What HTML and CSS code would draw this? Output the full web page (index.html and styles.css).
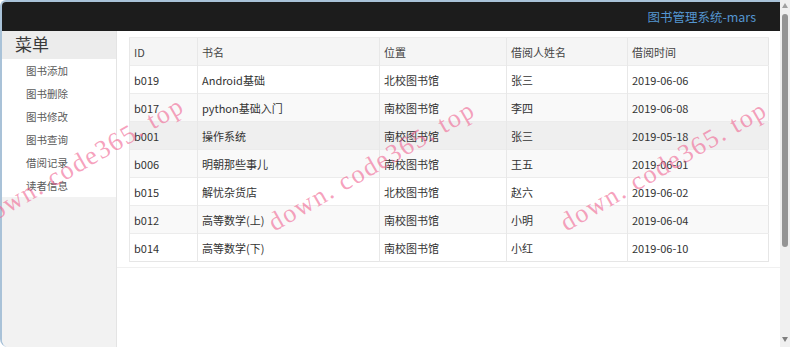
FILE: index.html
```html
<!DOCTYPE html>
<html lang="zh-CN">
<head>
  <meta charset="utf-8">
  <meta content="initial-scale=1" name="viewport">
  <title>图书管理系统-mars</title>
  <link rel="stylesheet" href="styles.css">
</head>
<body>
  <div class="screen">
    <div class="window">
      <header class="topbar"><span class="brand">图书管理系统-mars</span></header>
      <div class="layout">
        <aside class="sidebar">
          <div class="menu-title">菜单</div>
          <ul class="menu">
            <li>图书添加</li>
            <li>图书删除</li>
            <li>图书修改</li>
            <li>图书查询</li>
            <li>借阅记录</li>
            <li>读者信息</li>
          </ul>
        </aside>
        <main class="content">
          <div class="panel">
            <table class="books">
              <colgroup>
                <col class="c-id"><col class="c-name"><col class="c-place"><col class="c-reader"><col class="c-date">
              </colgroup>
              <thead>
                <tr><th>ID</th><th>书名</th><th>位置</th><th>借阅人姓名</th><th>借阅时间</th></tr>
              </thead>
              <tbody>
                <tr><td>b019</td><td>Android基础</td><td>北校图书馆</td><td>张三</td><td>2019-06-06</td></tr>
                <tr><td>b017</td><td>python基础入门</td><td>南校图书馆</td><td>李四</td><td>2019-06-08</td></tr>
                <tr class="active"><td>b001</td><td>操作系统</td><td>南校图书馆</td><td>张三</td><td>2019-05-18</td></tr>
                <tr><td>b006</td><td>明朝那些事儿</td><td>南校图书馆</td><td>王五</td><td>2019-06-01</td></tr>
                <tr><td>b015</td><td>解忧杂货店</td><td>北校图书馆</td><td>赵六</td><td>2019-06-02</td></tr>
                <tr><td>b012</td><td>高等数学(上)</td><td>南校图书馆</td><td>小明</td><td>2019-06-04</td></tr>
                <tr><td>b014</td><td>高等数学(下)</td><td>南校图书馆</td><td>小红</td><td>2019-06-10</td></tr>
              </tbody>
            </table>
          </div>
        </main>
      </div>
    </div>
    <div class="scrollbar">
      <span class="arrow up"></span>
      <span class="track"><span class="thumb"></span></span>
      <span class="arrow down"></span>
    </div>
    <!-- watermark overlay -->
    <div class="watermark wm-1">down. code365. top</div>
    <div class="watermark wm-2">down. code365. top</div>
    <div class="watermark wm-3">down. code365. top</div>
  </div>
</body>
</html>
```

FILE: styles.css
```css
html, body { margin: 0; height: 100%; background: #fff; }
body { font-family: "Noto Sans CJK SC", "Liberation Sans", sans-serif; color: #333; overflow: hidden; }

.screen { position: relative; display: flex; width: 790px; height: 347px; overflow: hidden; }

.window { flex: 1; display: flex; flex-direction: column; border-top: 2px solid #a9c2d8; border-left: 2px solid #a9c2d8; border-radius: 6px 0 0 8px; overflow: hidden; background: #fff; }

.topbar { height: 29px; flex-shrink: 0; background: #1c1c1c; display: flex; align-items: center; justify-content: flex-end; padding-right: 24px; }
.brand { color: #5495d0; font-size: 12.5px; }

.layout { flex: 1; display: flex; }

.sidebar { width: 114px; flex-shrink: 0; background: #f2f2f2; border-right: 1px solid #e4e4e4; }
.menu-title { height: 28px; line-height: 26px; padding-left: 13px; font-size: 17px; color: #3a3a3a; background: #ececec; }
.menu { list-style: none; margin: 0; padding: 0; background: #fff; }
.menu li { height: 23px; line-height: 23px; padding-left: 24px; font-size: 10.5px; color: #5a5a5a; }

.content { flex: 1; background: #fff; }
.panel { padding: 6px 12px 5px; border-bottom: 1px solid #f0f0f0; }

.books { width: 639px; border-collapse: collapse; table-layout: fixed; font-size: 11px; border: 1px solid #e6e6e6; }
.c-id { width: 68px; }
.c-name { width: 182px; }
.c-place { width: 127px; }
.c-reader { width: 121px; }
.c-date { width: 141px; }
.books th, .books td { height: 27px; padding: 0 4px; text-align: left; font-weight: normal; border-left: 1px solid #e8e8e8; border-top: 1px solid #ececec; color: #333; white-space: nowrap; }
.books thead tr { background: #f5f5f5; }
.books th { color: #444; }
.books tbody tr:nth-child(even) { background: #f9f9f9; }
.books tbody tr.active { background: #efefef; }

.scrollbar { width: 10px; flex-shrink: 0; background: #f0f0f0; display: flex; flex-direction: column; align-items: center; }
.arrow { width: 0; height: 0; border-left: 3.5px solid transparent; border-right: 3.5px solid transparent; }
.arrow.up { margin-top: 3px; border-bottom: 5px solid #a0a0a0; }
.arrow.down { margin-bottom: 5px; border-top: 5px solid #808080; }
.track { flex: 1; width: 100%; display: flex; justify-content: center; padding-top: 6px; }
.thumb { width: 6px; height: 233px; background: #959595; border-radius: 3px; }

.watermark { position: absolute; font-family: "Liberation Serif", serif; font-size: 26px; letter-spacing: 1.6px; line-height: 1; color: rgba(240, 100, 145, 0.6); white-space: nowrap; transform: rotate(-30deg); transform-origin: 0 100%; pointer-events: none; }
.wm-1 { left: -14px; top: 206px; }
.wm-2 { left: 277px; top: 210px; }
.wm-3 { left: 569px; top: 210px; }
```
